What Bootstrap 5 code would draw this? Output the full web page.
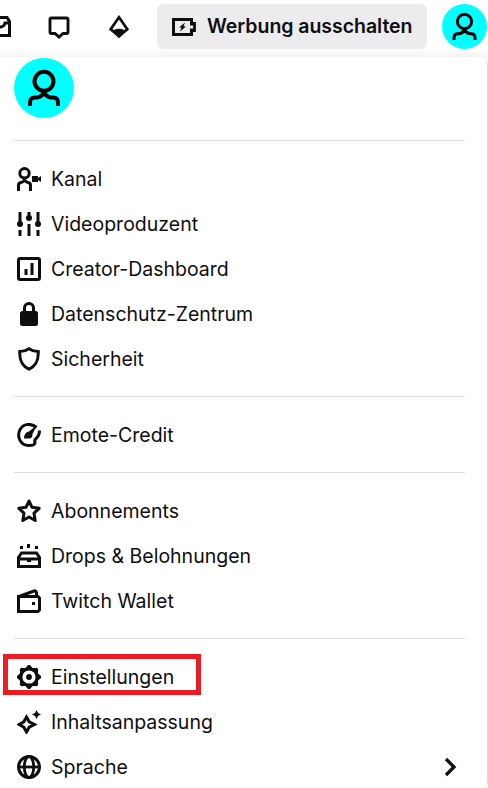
<!DOCTYPE html>
<html lang="de">
<head>
<meta charset="utf-8">
<meta name="viewport" content="width=device-width, initial-scale=1">
<title>Benutzermenü</title>
<link rel="stylesheet" href="https://cdn.jsdelivr.net/npm/bootstrap@5.3.0/dist/css/bootstrap.min.css">
<style>
body{font-family:Inter,"Liberation Sans",sans-serif;font-size:19.5px;color:#0e0e10;background:#fff;width:488px;height:788px;overflow:hidden}
svg{display:block;flex:none;fill:none;stroke:currentColor;stroke-width:3}
.solid{fill:currentColor;stroke:none}
.topbar{height:57px;padding-top:4px;background:linear-gradient(#fff 48px,#f4f4f4)}
.tool{height:45px}
.tool-inbox{width:12px}
.tool-chat{margin-left:36px}
.tool-bits{margin-left:38px}
.ad-btn{width:270px;height:45px;margin-left:27px;padding:0 0 0 15px;border:0;border-radius:6px;background:#ececee;color:#0e0e10;font-size:19.5px;font-weight:600;gap:11px;letter-spacing:-.04px;--bs-btn-hover-bg:#e2e2e6}
.avatar{border-radius:50%;background:#00ffff;color:#000}
.avatar-sm{width:45px;height:45px;margin-left:15px}
.avatar-lg{width:60px;height:60px}
.user-menu{width:488px;height:731px;padding:1px 22px 0 14px;border-right:1px solid #d9d9db;border-top-right-radius:7px;border-bottom-right-radius:6px;background:#fff}
.menu-group{border-top:1px solid #dedee0;padding:15px 0}
.menu-first{margin-top:22px}
.menu-row{height:45px;padding:0 3px;color:#0e0e10;line-height:30px;gap:10px}
.highlight{position:absolute;left:-11px;top:0;width:198px;height:41px;border:5px solid #ed1c24;pointer-events:none}
</style>
</head>
<body>
<header class="topbar d-flex">
  <div class="tool tool-inbox d-flex align-items-center"><svg width="12" height="24" viewBox="0 0 12 24"><path d="M0 2.500H7L9.500 6.500V20.500H0M9 8H5L4 10.500L1 12H0"/></svg></div>
  <div class="tool tool-chat d-flex align-items-center"><svg width="22" height="24" viewBox="0 0 22 24"><path d="M3.500 3H18.500Q20 3 20 4.500V17Q20 18.500 18.500 18.500H15L11 22L7 18.500H3.500Q2 18.500 2 17V4.500Q2 3 3.500 3Z" stroke-width="2.900"/></svg></div>
  <div class="tool tool-bits d-flex align-items-center"><svg width="22" height="24" viewBox="0 0 22 24"><path d="M11 2.300L2.700 14.200L11 21.200L19.300 14.200Z" stroke-width="2.700"/><path class="solid" d="M2 14.500L6 15Q11 12.500 16 15L20 14.500L11 23Z"/></svg></div>
  <button type="button" class="btn ad-btn d-flex align-items-center"><svg width="24" height="24" viewBox="0 0 24 24"><path d="M19.500 10.500V4.500H1.500V19.500H19.500V13.500"/><path d="M19.500 8.500H22.500V15.500H19.500" stroke-width="2.800"/><path class="solid" d="M13 7.500L7 12.500H9.500L8 16.500L14 11.500H11.500Z"/></svg><span>Werbung ausschalten</span></button>
  <div class="avatar avatar-sm d-flex align-items-center justify-content-center"><svg width="45" height="45" viewBox="0 0 60 60"><use href="#person"/></svg></div>
</header>
<main class="user-menu">
  <div class="avatar avatar-lg"><svg width="60" height="60" viewBox="0 0 60 60"><g id="person" stroke-width="4"><circle cx="30" cy="23.300" r="9.500"/><path d="M16 48V44.500Q16 39.500 21 39.500H22.500Q26.500 39.500 30 35Q33.500 39.500 37.500 39.500H39Q44 39.500 44 44.500V48"/><path class="solid" d="M27 33H33L31.500 37.500H28.500Z"/></g></svg></div>
  <nav>
    <div class="menu-group menu-first">
      <a class="menu-row d-flex align-items-center text-decoration-none" href="#"><svg width="24" height="24" viewBox="0 0 24 24"><circle cx="7.500" cy="6.300" r="4.700"/><path d="M1.500 24V18.500Q1.500 15.500 4 15.500Q6 15.300 7.500 13Q9 15.300 11 15.500Q13.500 15.500 13.500 18.500V24"/><path class="solid" d="M15 9H21V11L24 9V15L21 13V15H15Z"/></svg><span>Kanal</span></a>
      <a class="menu-row d-flex align-items-center text-decoration-none" href="#"><svg width="24" height="24" viewBox="0 0 24 24"><path d="M3 0V12M3 18V24M12 0V6M12 12V24M21 0V12M21 18V24"/><g class="solid"><circle cx="3" cy="12" r="3"/><circle cx="12" cy="6" r="3"/><circle cx="21" cy="12" r="3"/></g></svg><span>Videoproduzent</span></a>
      <a class="menu-row d-flex align-items-center text-decoration-none" href="#"><svg width="24" height="24" viewBox="0 0 24 24"><rect x="1.500" y="1.500" width="21" height="21" rx="1.500"/><path d="M9 12V18M15 6V18"/></svg><span>Creator-Dashboard</span></a>
      <a class="menu-row d-flex align-items-center text-decoration-none" href="#"><svg width="24" height="24" viewBox="0 0 24 24"><rect class="solid" x="3" y="9" width="18" height="15" rx="2.500"/><path d="M7.500 10V6A4.500 4.500 0 0 1 16.500 6V10"/></svg><span>Datenschutz-Zentrum</span></a>
      <a class="menu-row d-flex align-items-center text-decoration-none" href="#"><svg width="24" height="24" viewBox="0 0 24 24"><path d="M12 1.700Q8 4.400 2.700 4.600C2.500 13 4.500 18.500 12 22.200C19.500 18.500 21.500 13 21.300 4.600Q16 4.400 12 1.700Z"/></svg><span>Sicherheit</span></a>
    </div>
    <div class="menu-group">
      <a class="menu-row d-flex align-items-center text-decoration-none" href="#"><svg width="24" height="24" viewBox="0 0 24 24"><path d="M19.500 4.500C13 -1 5.500 1.500 2.800 7C-.5 14.500 4 22.500 11.500 22.500C15 22.500 18 21.500 18 19.500Q17 17 20 14.500Q22.500 12 22.500 7.500"/><path class="solid" d="M20 2L15.500 11Q15.500 15.500 12 15.500H7Q7 9.500 12 8.500Z"/></svg><span>Emote-Credit</span></a>
    </div>
    <div class="menu-group">
      <a class="menu-row d-flex align-items-center text-decoration-none" href="#"><svg width="24" height="24" viewBox="0 0 24 24"><path stroke-linejoin="round" d="M12 2L15 8.300L22.200 9.300L17 14.200L18.200 21.500L12 18L5.800 21.500L7 14.200L1.800 9.300L9 8.300Z"/></svg><span>Abonnements</span></a>
      <a class="menu-row d-flex align-items-center text-decoration-none" href="#"><svg width="24" height="24" viewBox="0 0 24 24"><path d="M1.500 22.500V13.500L4.500 9H19.500L22.500 13.500V22.500ZM1.500 15H22.500"/><path class="solid" d="M3 2H6V5H3ZM10 0H13V4H10ZM18 2H21V5H18ZM10 15H14V18H10Z"/></svg><span>Drops &amp; Belohnungen</span></a>
      <a class="menu-row d-flex align-items-center text-decoration-none" href="#"><svg width="24" height="24" viewBox="0 0 24 24"><path d="M1.500 7.500H21L22.500 9V21L21 22.500H1.500ZM2 7.500L17 2Q19 1.500 19.500 3.500V7.500"/><rect class="solid" x="15" y="13" width="3" height="3"/></svg><span>Twitch Wallet</span></a>
    </div>
    <div class="menu-group">
      <a class="menu-row position-relative d-flex align-items-center text-decoration-none" href="#"><svg width="24" height="24" viewBox="0 0 24 24"><circle cx="12" cy="12" r="8.200" stroke-width="3.200"/><g class="solid"><path id="teeth" d="M8 3.500L11 0H13L16 3.500ZM8 20.500L11 24H13L16 20.500ZM3.500 8L0 11V13L3.500 16ZM20.500 8L24 11V13L20.500 16Z"/><use href="#teeth" transform="rotate(45 12 12)"/></g><circle class="solid" cx="12" cy="12" r="2.900"/></svg><span>Einstellungen</span><span class="highlight"></span></a>
      <a class="menu-row d-flex align-items-center text-decoration-none" href="#"><svg width="24" height="24" viewBox="0 0 24 24"><path d="M9.500 7L12.200 11.800L17.500 14.500L12.200 17.200L9.500 22L6.800 17.200L2 14.500L6.800 11.800Z"/><path class="solid" d="M19.500 0L21 3L24 4.500L21 6L19.500 9L18 6L15 4.500L18 3Z"/></svg><span>Inhaltsanpassung</span></a>
      <a class="menu-row d-flex align-items-center text-decoration-none" href="#"><svg width="24" height="24" viewBox="0 0 24 24"><circle cx="12" cy="12" r="10.500"/><ellipse cx="12" cy="12" rx="4.700" ry="10.500" stroke-width="2.800"/><path d="M1.500 12H22.500" stroke-width="2.800"/></svg><span>Sprache</span><svg class="ms-auto" width="24" height="24" viewBox="0 0 24 24"><path d="M8 4L16 12L8 20" stroke-width="3.300"/></svg></a>
    </div>
  </nav>
</main>
<script src="https://cdn.jsdelivr.net/npm/bootstrap@5.3.0/dist/js/bootstrap.bundle.min.js"></script>
</body>
</html>
